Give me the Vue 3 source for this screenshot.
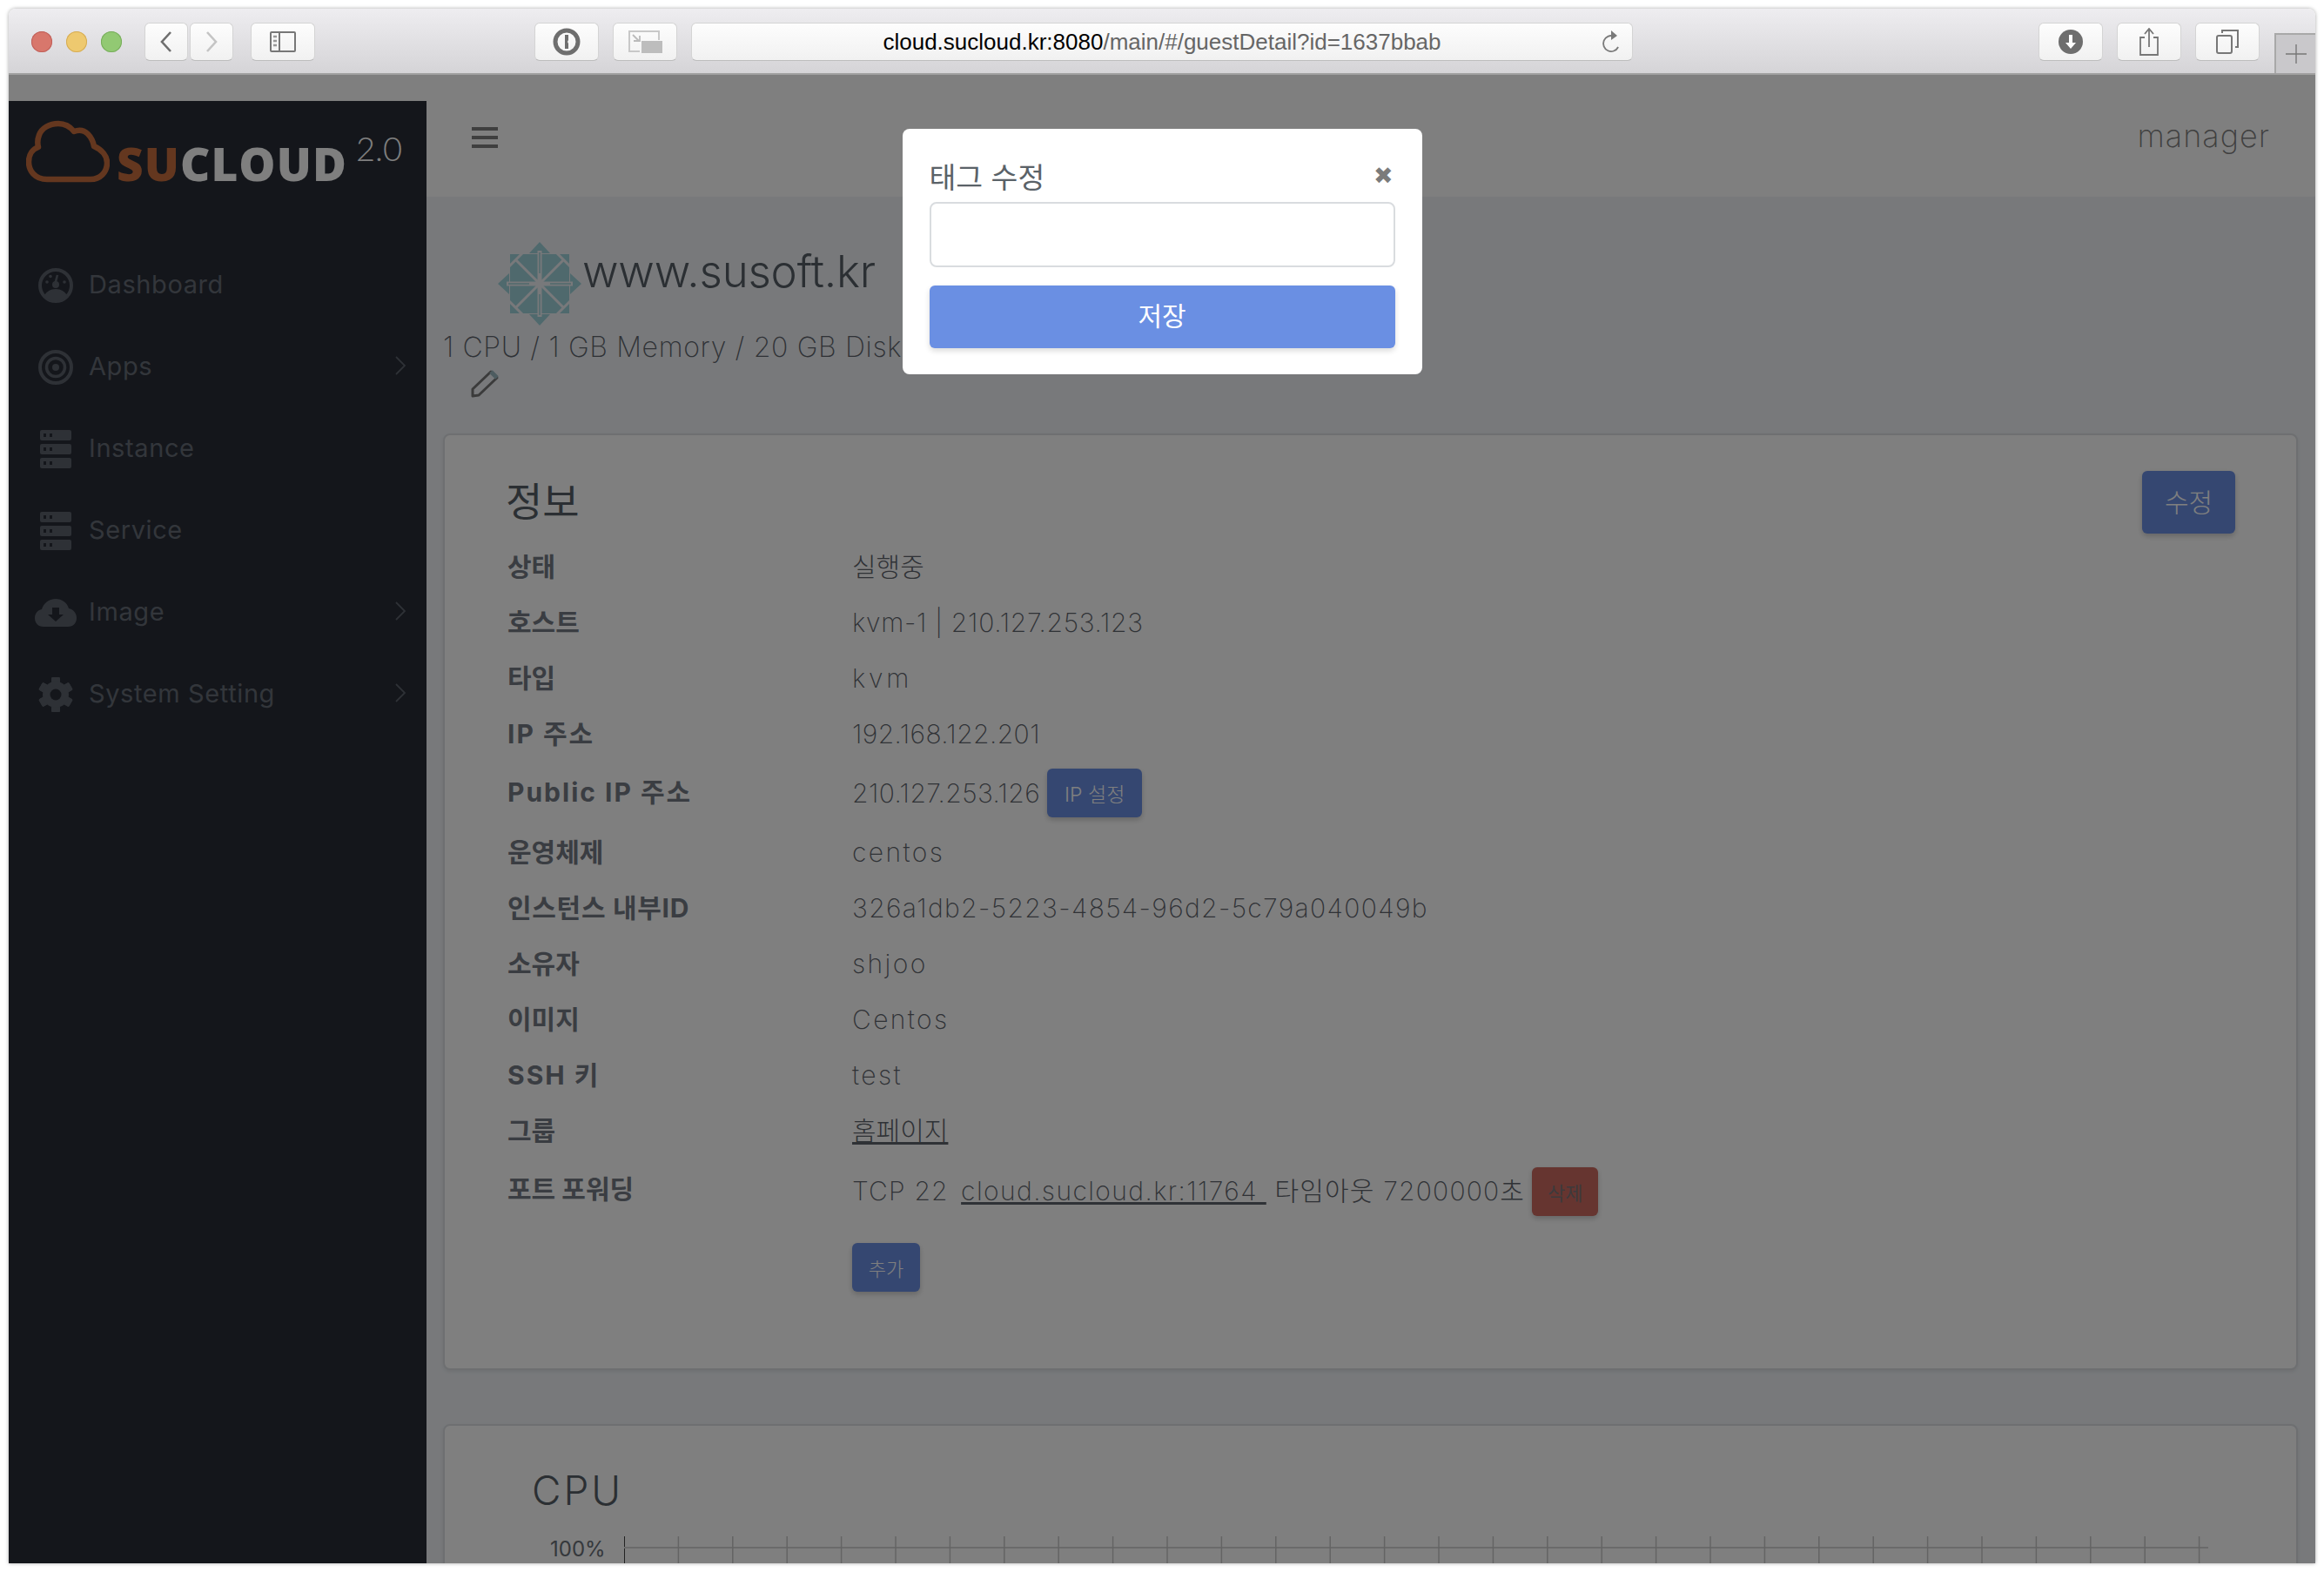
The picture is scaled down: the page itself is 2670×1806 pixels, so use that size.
<template>
  <div class="window">
    <!-- 브라우저 툴바 -->
    <div class="toolbar">
      <div class="lights">
        <span class="light red"></span>
        <span class="light yellow"></span>
        <span class="light green"></span>
      </div>
      <div class="nav-pair">
        <button class="tb-btn nav">
          <svg width="16" height="26" viewBox="0 0 16 26"><path d="M13 2 3 13l10 11" fill="none" stroke="#6e6e6e" stroke-width="2.6" /></svg>
        </button>
        <button class="tb-btn nav">
          <svg width="16" height="26" viewBox="0 0 16 26"><path d="m3 2 10 11L3 24" fill="none" stroke="#c4c4c4" stroke-width="2.6" /></svg>
        </button>
      </div>
      <button class="tb-btn side">
        <svg width="30" height="24" viewBox="0 0 30 24">
          <rect x="1" y="1" width="28" height="22" rx="1" fill="none" stroke="#777" stroke-width="2" />
          <path d="M11 1v22" stroke="#777" stroke-width="2" />
          <path d="M4 6h4M4 11h4M4 16h4" stroke="#999" stroke-width="2.4" />
        </svg>
      </button>
      <button class="tb-btn pw">
        <svg width="32" height="32" viewBox="0 0 32 32">
          <circle cx="16" cy="16" r="13" fill="none" stroke="#6e6e6e" stroke-width="5" />
          <path d="M14 8h4v6l-1 2 1 2v6h-4z" fill="#6e6e6e" />
        </svg>
      </button>
      <button class="tb-btn reader">
        <svg width="40" height="26" viewBox="0 0 40 26">
          <path d="M36 11V1H2v23h12" fill="none" stroke="#c8c8c8" stroke-width="2" />
          <path d="m6 5 7 7M14 6v6H7" fill="none" stroke="#bbb" stroke-width="1.8" />
          <rect x="16" y="12" width="24" height="14" fill="#bdbdbd" />
        </svg>
      </button>
      <div class="url">
        <span class="url-text"><b>cloud.sucloud.kr:8080</b>/main/#/guestDetail?id=1637bbab</span>
        <svg class="reload" width="24" height="28" viewBox="0 0 24 28">
          <path d="M12 7a9 9 0 1 0 9 10" fill="none" stroke="#7a7a7a" stroke-width="1.8" transform="rotate(20 12 16)" />
          <path d="m12 1 7 6-7 5z" fill="#7a7a7a" />
        </svg>
      </div>
      <div class="tb-right">
        <button class="tb-btn">
          <svg width="28" height="28" viewBox="0 0 28 28">
            <circle cx="14" cy="14" r="14" fill="#6e6e6e" />
            <path d="M12 6h4v9h4l-6 7-6-7h4z" fill="#fff" />
          </svg>
        </button>
        <button class="tb-btn">
          <svg width="22" height="32" viewBox="0 0 22 32">
            <path d="M6 11H1v20h20V11h-5" fill="none" stroke="#777" stroke-width="1.8" />
            <path d="M11 22V2M6 7l5-6 5 6" fill="none" stroke="#777" stroke-width="1.8" />
          </svg>
        </button>
        <button class="tb-btn">
          <svg width="26" height="28" viewBox="0 0 26 28">
            <rect x="1" y="7" width="17" height="20" rx="2" fill="none" stroke="#777" stroke-width="2" />
            <path d="M7 4V1h18v19h-3" fill="none" stroke="#777" stroke-width="2" />
          </svg>
        </button>
      </div>
      <div class="new-tab">
        <svg width="24" height="22" viewBox="0 0 24 22"><path d="M12 0v22M0 11h24" stroke="#777" stroke-width="1.4" /></svg>
      </div>
    </div>

    <div class="page">
      <aside class="sidebar">
        <div class="logo">
          <svg class="logo-cloud" width="96" height="72" viewBox="0 0 96 72">
            <path d="M24 68C10 68 3 58 3 48c0-9 5-15 11-17-1-4-1-9 1-14C18 9 27 4 37 4c8 0 14 4 18 9 5-2 11-2 16 3 4 4 6 9 7 14 9 4 15 11 15 19 0 11-8 19-19 19z" fill="none" stroke="#c86e3e" stroke-width="6.500" stroke-linejoin="round" />
          </svg>
          <span class="logo-text"><span class="su">SU</span>CLOUD</span>
          <span class="logo-ver">2.0</span>
        </div>
        <nav class="menu">
          <div class="menu-item" v-for="m in menus" :key="m.name">
            <span class="menu-icon">
              <svg v-if="m.icon === 'gauge'" width="40" height="40" viewBox="0 0 40 40">
                <circle cx="20" cy="20" r="18" fill="none" stroke="#5c626c" stroke-width="4" />
                <path d="M6 33c3-6 8-9 14-9s11 3 14 9c-3 3-8 5-14 5s-11-2-14-5z" fill="#5c626c" />
                <circle cx="20" cy="19" r="4" fill="#5c626c" />
                <path d="m19 19 3-11" stroke="#5c626c" stroke-width="2.6" />
                <circle cx="10" cy="16" r="1.8" fill="#5c626c" />
                <circle cx="14" cy="9.500" r="1.8" fill="#5c626c" />
                <circle cx="30" cy="16" r="1.8" fill="#5c626c" />
              </svg>
              <svg v-else-if="m.icon === 'target'" width="40" height="40" viewBox="0 0 40 40">
                <circle cx="20" cy="20" r="18" fill="none" stroke="#5c626c" stroke-width="4" />
                <circle cx="20" cy="20" r="10.500" fill="none" stroke="#5c626c" stroke-width="3.500" />
                <circle cx="20" cy="20" r="4" fill="#5c626c" />
              </svg>
              <svg v-else-if="m.icon === 'server'" width="36" height="44" viewBox="0 0 36 44">
                <g v-for="y in [0, 16, 32]" :key="y">
                  <rect x="0" :y="y" width="36" height="12" rx="2" fill="#5c626c" />
                  <rect x="4" :y="y + 4" width="3" height="4" fill="#282c36" />
                  <rect x="11" :y="y + 4" width="3" height="4" fill="#282c36" />
                </g>
              </svg>
              <svg v-else-if="m.icon === 'cloud'" width="48" height="32" viewBox="0 0 48 32">
                <path d="M10 32C4 32 0 28 0 22c0-5 3-9 8-10C10 5 16 0 24 0c7 0 13 4 15 11 5 1 9 5 9 11 0 6-4 10-10 10z" fill="#5c626c" />
                <path d="M20 10h8v8h5l-9 8-9-8h5z" fill="#282c36" />
              </svg>
              <svg v-else width="40" height="40" viewBox="0 0 40 40">
                <g fill="#5c626c">
                  <rect v-for="a in [0, 60, 120, 180, 240, 300]" :key="a" x="15" y="0" width="10" height="40" rx="1.5" :transform="`rotate(${a} 20 20)`" />
                  <circle cx="20" cy="20" r="15" />
                </g>
                <circle cx="20" cy="20" r="6.500" fill="#282c36" />
              </svg>
            </span>
            <span class="menu-name">{{ m.name }}</span>
            <svg v-if="m.sub" class="chev" width="12" height="22" viewBox="0 0 12 22"><path d="m1 1 10 10L1 21" fill="none" stroke="#5c626c" stroke-width="1.8" /></svg>
          </div>
        </nav>
      </aside>

      <main class="main">
        <header class="header">
          <svg class="burger" width="30" height="24" viewBox="0 0 30 24"><path d="M0 2h30M0 12h30M0 22h30" stroke="#7f7f7f" stroke-width="4" /></svg>
          <span class="user">manager</span>
        </header>
        <div class="content">
          <div class="title-row">
            <svg class="os-logo" width="96" height="96" viewBox="0 0 96 96">
              <rect x="14" y="14" width="68" height="68" fill="#9ed3da" />
              <path d="M48 0 60 13H36zM48 96 36 83h24zM0 48l13-12v24zM96 48 83 60V36z" fill="#9ed3da" />
              <g stroke="#f0f3f7" fill="none">
                <path d="M48 10v76M10 48h76" stroke-width="5" />
                <path d="M21 21 75 75M75 21 21 75" stroke-width="3" />
                <path d="M28 13 13 28M68 13l15 15M28 83 13 68M68 83l15-15" stroke-width="3" />
              </g>
              <circle cx="48" cy="48" r="5" fill="#f0f3f7" />
              <path d="M48 12v24M48 60v24M12 48h24M60 48h24" stroke="#9ed3da" stroke-width="1.500" />
            </svg>
            <h1 class="host-name">www.susoft.kr</h1>
          </div>
          <div class="spec">1 CPU / 1 GB Memory / 20 GB Disk</div>
          <div class="edit">
            <svg width="34" height="34" viewBox="0 0 34 34">
              <path d="M3 23 24 3l7 7-21 20-7 1z" fill="none" stroke="#777" stroke-width="3" stroke-linejoin="round" />
              <path d="m24 3 7 7" stroke="#9ab8c0" stroke-width="5" />
            </svg>
          </div>

          <section class="card info-card">
            <div class="card-head">
              <h2>정보</h2>
              <button class="btn primary big">수정</button>
            </div>
            <div class="row" v-for="r in rows" :key="r.label" :class="{ tall: r.ip }">
              <span class="label" :class="r.labelKind">{{ r.label }}</span>
              <span class="value" :class="[r.kind, { link: r.link }]">{{ r.value }}</span>
              <button v-if="r.ip" class="btn primary ip-btn">IP 설정</button>
            </div>
            <div class="row port">
              <span class="label">포트 포워딩</span>
              <span class="value port-val">TCP 22 &nbsp;<u class="port-link">cloud.sucloud.kr:11764&nbsp;</u> 타임아웃 7200000초</span>
              <button class="btn danger">삭제</button>
            </div>
            <div class="add-row">
              <button class="btn primary">추가</button>
            </div>
          </section>

          <section class="card cpu-card">
            <h2 class="cpu-title">CPU</h2>
            <div class="chart">
              <span class="axis-label">100%</span>
              <svg width="1820" height="40" viewBox="0 0 1820 40">
                <path d="M0 0v40" stroke="#444" stroke-width="2" />
                <path d="M0 13h1820" stroke="#d4d4d4" stroke-width="2" />
                <path v-for="t in ticks" :key="t" :d="`M${t} 0v40`" stroke="#c8c8c8" stroke-width="1.500" />
              </svg>
            </div>
          </section>
        </div>
      </main>

      <!-- 태그 수정 모달 -->
      <div class="overlay">
        <div class="modal">
          <div class="modal-head">
            <span class="modal-title">태그 수정</span>
            <span class="close">✖</span>
          </div>
          <input class="modal-input" type="text" v-model="tag" />
          <button class="save">저장</button>
        </div>
      </div>
    </div>
  </div>
</template>

<script setup>
import { ref } from "vue";

const tag = ref("");

const menus = [
  { name: "Dashboard", icon: "gauge" },
  { name: "Apps", icon: "target", sub: true },
  { name: "Instance", icon: "server" },
  { name: "Service", icon: "server" },
  { name: "Image", icon: "cloud", sub: true },
  { name: "System Setting", icon: "gear", sub: true },
];

const rows = [
  { label: "상태", value: "실행중", kind: "ko" },
  { label: "호스트", value: "kvm-1 | 210.127.253.123", kind: "host" },
  { label: "타입", value: "kvm", kind: "wide" },
  { label: "IP 주소", value: "192.168.122.201", kind: "num", labelKind: "latin" },
  { label: "Public IP 주소", value: "210.127.253.126", kind: "num", ip: true, labelKind: "latin" },
  { label: "운영체제", value: "centos", kind: "word" },
  { label: "인스턴스 내부ID", value: "326a1db2-5223-4854-96d2-5c79a040049b", kind: "hash", labelKind: "mid" },
  { label: "소유자", value: "shjoo", kind: "word" },
  { label: "이미지", value: "Centos", kind: "word" },
  { label: "SSH 키", value: "test", kind: "word", labelKind: "latin" },
  { label: "그룹", value: "홈페이지", kind: "ko", link: true },
];

const ticks = Array.from({ length: 29 }, (_, i) => 62.4 * (i + 1));
</script>

<style>
html,
body {
  margin: 0;
  background: #fff;
}
</style>

<style scoped>
.window {
  width: 2650px;
  height: 1786px;
  margin: 10px;
  display: flex;
  flex-direction: column;
  overflow: hidden;
  border-radius: 8px 8px 0 0;
  box-shadow: 0 0 4px rgba(0, 0, 0, 0.35);
  font-family: Inter, "Noto Sans CJK KR", sans-serif;
}
.toolbar {
  height: 76px;
  flex: none;
  box-sizing: border-box;
  display: flex;
  align-items: flex-start;
  padding: 16px 0 0 26px;
  background: linear-gradient(#eeedf0, #d5d4d7);
  border-bottom: 2px solid #a0a0a0;
  position: relative;
}
.lights {
  display: flex;
  gap: 16px;
  margin-top: 10px;
  width: 130px;
}
.light {
  width: 24px;
  height: 24px;
  border-radius: 50%;
}
.red {
  background: #d8776c;
  box-shadow: inset 0 0 0 1px #c0605a;
}
.yellow {
  background: #eec96f;
  box-shadow: inset 0 0 0 1px #d5ac55;
}
.green {
  background: #92c973;
  box-shadow: inset 0 0 0 1px #78ad5c;
}
.nav-pair {
  display: flex;
  gap: 2px;
}
.tb-btn {
  height: 44px;
  width: 74px;
  padding: 0;
  display: flex;
  align-items: center;
  justify-content: center;
  background: linear-gradient(#fdfdfd, #f1f1f1);
  border: 1px solid #d4d4d4;
  border-bottom-color: #bdbdbd;
  border-radius: 6px;
}
.tb-btn.nav {
  width: 50px;
}
.side {
  margin-left: 20px;
}
.pw {
  margin-left: 252px;
}
.reader {
  margin-left: 16px;
}
.url {
  width: 1082px;
  height: 44px;
  box-sizing: border-box;
  margin-left: 16px;
  background: linear-gradient(#fdfdfd, #f1f1f1);
  border: 1px solid #d4d4d4;
  border-bottom-color: #bdbdbd;
  border-radius: 6px;
  display: flex;
  align-items: center;
  justify-content: center;
  position: relative;
}
.url-text {
  font-family: "Liberation Sans", sans-serif;
  font-size: 26px;
  color: #666;
}
.url-text b {
  font-weight: 400;
  color: #000;
}
.reload {
  position: absolute;
  right: 12px;
  top: 7px;
}
.tb-right {
  display: flex;
  gap: 16px;
  margin-left: 466px;
}
.new-tab {
  position: absolute;
  right: 0;
  top: 28px;
  width: 47px;
  height: 46px;
  box-sizing: border-box;
  background: #c9c8cb;
  border: 2px solid #a8a8a8;
  border-width: 2px 0 0 2px;
  display: flex;
  align-items: center;
  justify-content: center;
}
.page {
  flex: 1;
  display: flex;
  position: relative;
  overflow: hidden;
  background: #fff;
}
.sidebar {
  width: 480px;
  flex: none;
  margin-top: 30px;
  background: #282c36;
}
.logo {
  height: 114px;
  display: flex;
  align-items: flex-start;
  position: relative;
  padding: 22px 0 0 20px;
  box-sizing: border-box;
}
.logo-cloud {
  flex: none;
}
.logo-text {
  margin: 20px 0 0 8px;
  font-family: "Open Sans", sans-serif;
  font-weight: 800;
  font-size: 53px;
  line-height: 60px;
  color: #fff;
  letter-spacing: 1.1px;
}
.su {
  color: #c86e3e;
}
.logo-ver {
  position: absolute;
  left: 399px;
  top: 32px;
  font-family: Lato, sans-serif;
  font-weight: 300;
  font-size: 38px;
  line-height: 44px;
  color: #fff;
}
.menu {
  padding-top: 51px;
}
.menu-item {
  height: 94px;
  display: flex;
  align-items: center;
  padding-left: 30px;
  box-sizing: border-box;
  position: relative;
}
.menu-icon {
  width: 48px;
  display: flex;
  justify-content: center;
  flex: none;
}
.menu-name {
  margin: 0 0 4px 14px;
  font-size: 29px;
  font-weight: 400;
  letter-spacing: 0.6px;
  color: #666c76;
}
.chev {
  position: absolute;
  right: 24px;
  top: 34px;
}
.main {
  flex: 1;
  min-width: 0;
  display: flex;
  flex-direction: column;
  background: #f0f3f7;
}
.header {
  height: 140px;
  flex: none;
  background: #fff;
  display: flex;
  align-items: center;
  justify-content: space-between;
  padding: 0 52px;
  box-sizing: border-box;
}
.burger {
  margin-top: 3px;
}
.user {
  font-weight: 200;
  font-size: 36px;
  letter-spacing: 1px;
  color: #808080;
}
.content {
  padding: 52px 20px 0 19px;
}
.title-row {
  display: flex;
  align-items: center;
  margin-left: 63px;
  height: 96px;
}
.os-logo {
  flex: none;
}
.host-name {
  margin: 0 0 30px 1px;
  font-size: 51px;
  font-weight: 300;
  letter-spacing: -0.2px;
  color: #565e66;
}
.spec {
  font-size: 32px;
  line-height: 50px;
  font-weight: 200;
  letter-spacing: 0.66px;
  color: #5f656d;
  white-space: nowrap;
}
.edit {
  margin-left: 31px;
  height: 74px;
}
.card {
  background: #fff;
  border: 2px solid #dcdfe3;
  border-radius: 8px;
  box-sizing: border-box;
  box-shadow: 0 2px 4px rgba(0, 0, 0, 0.08);
}
.info-card {
  height: 1076px;
  padding: 40px 70px 0 72px;
}
.card-head {
  height: 79px;
  display: flex;
  align-items: center;
  justify-content: space-between;
}
.card-head h2 {
  margin: 0 0 14px -2px;
  font-size: 46px;
  font-weight: 400;
  color: #565e66;
}
.row {
  display: flex;
  align-items: center;
  min-height: 64px;
  font-size: 30px;
}
.row.tall {
  min-height: 72px;
}
.label {
  width: 396px;
  flex: none;
  margin-bottom: 4px;
  font-weight: 700;
  color: #747a84;
}
.label.latin {
  letter-spacing: 2px;
}
.label.mid {
  letter-spacing: 0.7px;
}
.row.tall .label {
  margin-bottom: 6px;
}
.value {
  font-weight: 200;
  color: #5f656d;
  white-space: nowrap;
}
.value.ko {
  margin-bottom: 5px;
  font-weight: 300;
}
.value.word {
  letter-spacing: 2.4px;
}
.value.wide {
  letter-spacing: 3.8px;
}
.value.hash {
  letter-spacing: 1.35px;
}
.value.host {
  letter-spacing: 0.7px;
}
.value.num {
  letter-spacing: 0.4px;
}
.value.link {
  text-decoration: underline;
}
.port-val {
  letter-spacing: 1.2px;
}
.port-link {
  margin-left: -5px;
  letter-spacing: 1.4px;
}
.btn {
  border: none;
  border-radius: 6px;
  height: 56px;
  padding: 0 18px;
  margin-left: 8px;
  font-family: inherit;
  font-size: 22px;
  font-weight: 300;
  color: #fff;
  box-shadow: 0 3px 6px rgba(0, 0, 0, 0.2);
}
.btn.big {
  height: 72px;
  width: 107px;
  font-size: 30px;
  margin: 0 0 6px;
  padding: 0 0 4px;
}
.ip-btn {
  width: 109px;
  padding: 0;
  font-size: 23px;
}
.primary {
  background: #6a8fe3;
}
.danger {
  background: #cc6a60;
  color: #7a7478;
  font-weight: 400;
  margin-top: 6px;
  width: 76px;
  padding: 0;
}
.port {
  min-height: 70px;
}
.add-row {
  margin: 27px 0 0 396px;
}
.add-row .btn {
  margin: 0;
  width: 78px;
  padding: 0;
}
.cpu-card {
  margin-top: 62px;
  height: 400px;
  padding: 39px 0 0 0;
}
.cpu-title {
  margin: 0 0 0 100px;
  font-size: 46px;
  line-height: 70px;
  font-weight: 300;
  letter-spacing: 3px;
  color: #565e66;
}
.chart {
  display: flex;
  align-items: flex-start;
  margin: 18px 0 0 121px;
}
.axis-label {
  font-size: 24px;
  line-height: 30px;
  color: #6a7078;
  width: 85px;
  flex: none;
}
.overlay {
  position: absolute;
  inset: 0;
  background: rgba(0, 0, 0, 0.5);
  display: flex;
  justify-content: center;
  align-items: flex-start;
  padding-top: 62px;
}
.modal {
  width: 597px;
  box-sizing: border-box;
  background: #fff;
  border-radius: 8px;
  padding: 29px 31px 30px;
}
.modal-head {
  display: flex;
  align-items: center;
  justify-content: space-between;
  height: 55px;
  padding-bottom: 6px;
  box-sizing: border-box;
}
.modal-title {
  font-size: 33.500px;
  font-weight: 400;
  color: #5a6268;
}
.close {
  font-size: 27px;
  margin-right: 2px;
  color: #7b7b7b;
}
.modal-input {
  display: block;
  width: 100%;
  height: 75px;
  box-sizing: border-box;
  border: 2px solid #d9dcdf;
  border-radius: 8px;
  outline: none;
}
.save {
  display: block;
  width: 100%;
  height: 72px;
  margin-top: 21px;
  padding: 0 0 7px;
  border: none;
  border-radius: 6px;
  background: #6a8fe3;
  color: #fff;
  font-family: inherit;
  font-size: 30px;
  box-shadow: 0 3px 6px rgba(0, 0, 0, 0.15);
}
</style>
